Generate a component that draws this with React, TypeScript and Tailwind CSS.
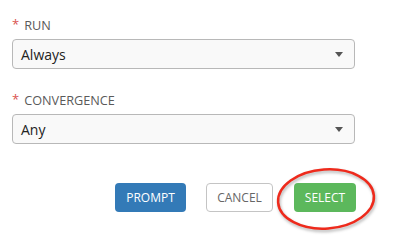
export default function App() {
  return (
    <div
      className="relative w-[394px] h-[240px] bg-white"
      style={{ fontFamily: '"Open Sans", "Liberation Sans", sans-serif' }}
    >
      <div className="pl-[12px] pt-[17px] w-[355px]">
        <Field label="RUN" value="Always" />
        <div className="h-[23px]" />
        <Field label="CONVERGENCE" value="Any" />
        <div className="flex justify-end gap-[20px] mt-[39px] pr-0 w-[344px]">
          <button className="h-[29px] w-[71px] rounded-[4px] bg-[#337ab7] text-white text-[12px]">
            PROMPT
          </button>
          <button className="h-[29px] w-[67px] rounded-[4px] border border-[#c4c4c4] bg-white text-[#666] text-[12px]">
            CANCEL
          </button>
          <button className="h-[29px] w-[62px] ml-[1px] rounded-[4px] bg-[#5cb85c] text-white text-[12px]">
            SELECT
          </button>
        </div>
      </div>
      <svg
        className="absolute left-[270px] top-[162px] pointer-events-none"
        width="114"
        height="76"
        viewBox="0 0 114 76"
        style={{ filter: 'drop-shadow(1px 2px 1.5px rgba(0,0,0,0.3))' }}
      >
        <ellipse
          cx="56"
          cy="37"
          rx="48"
          ry="29.5"
          fill="none"
          stroke="#ee2a1c"
          strokeWidth="2.5"
          transform="rotate(-4 56 37)"
        />
      </svg>
    </div>
  )
}

function Field({ label, value }: { label: string; value: string }) {
  return (
    <div>
      <div className="flex items-center h-[18px] text-[12.7px] text-[#5a5a5a]">
        <span className="text-[#d9534f] mr-[5px] text-[13px] -mt-[2px]">*</span>
        {label}
      </div>
      <div className="mt-[4px] h-[30px] w-[343px] rounded-[4px] border border-[#b8b8b8] bg-[#f9f9f9] flex items-center justify-between pl-[8px] pr-[11px]">
        <span className="text-[14px] text-[#222]">{value}</span>
        <svg width="8" height="5" viewBox="0 0 8 5">
          <path d="M0 0h8L4 5z" fill="#555" />
        </svg>
      </div>
    </div>
  )
}
